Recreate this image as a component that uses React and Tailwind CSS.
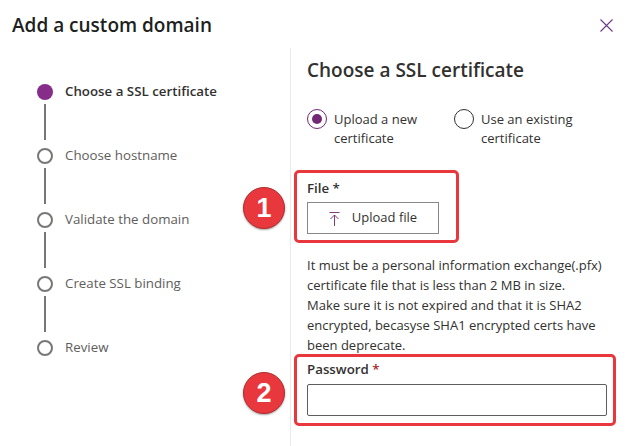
const steps = [
  { label: "Choose a SSL certificate", active: true },
  { label: "Choose hostname" },
  { label: "Validate the domain" },
  { label: "Create SSL binding" },
  { label: "Review" },
];

const Badge = ({ n, className }) => (
  <span
    className={`absolute flex items-center justify-center w-[42px] h-[42px] rounded-full bg-[#e8383d] border border-[#b32a2e] text-white text-[27px] font-bold leading-none shadow-[0_1px_2px_rgba(0,0,0,0.35)] ${className}`}
    style={{ fontFamily: '"Liberation Sans", Arial, sans-serif' }}
  >
    {n}
  </span>
);

const Radio = ({ checked, children, className }) => (
  <label className={`flex items-start gap-[7px] ${className}`}>
    <span
      className={`mt-[-1px] flex items-center justify-center w-5 h-5 shrink-0 rounded-full border ${
        checked ? "border-[#742774]" : "border-[#323130]"
      }`}
    >
      {checked && <span className="w-[10px] h-[10px] rounded-full bg-[#742774]" />}
    </span>
    <span className="text-[13px] leading-[19px] text-[#323130]">{children}</span>
  </label>
);

const UploadIcon = () => (
  <svg width="11" height="15" viewBox="0 0 11 15" fill="none" stroke="#742774" strokeWidth="0.9">
    <path d="M0.5 1.5h10" />
    <path d="M5.5 4v11" />
    <path d="M1.5 8l4-4 4 4" />
  </svg>
);

export default function App() {
  return (
    <div
      className="w-[627px] h-[446px] bg-white overflow-hidden flex flex-col"
      style={{ fontFamily: '"Segoe UI", "Open Sans", "Liberation Sans", sans-serif' }}
    >
      <div className="h-12 shrink-0 flex items-start justify-between pl-3 pr-[14px] pt-[11px]">
        <h1 className="text-[19px] leading-[28px] font-semibold text-[#201f1e]">Add a custom domain</h1>
        <button className="mt-[8px] text-[#6b3a8a]">
          <svg width="13" height="13" viewBox="0 0 13 13" stroke="currentColor" strokeWidth="1.1">
            <path d="M0.5 0.5l12 12M12.5 0.5l-12 12" />
          </svg>
        </button>
      </div>

      <div className="flex flex-1 min-h-0">
        <div className="w-[291px] shrink-0 border-r border-[#edebe9] pl-[37px] pt-9">
          {steps.map((s, i) => (
            <div key={s.label}>
              <div className="flex items-center gap-3 h-4">
                <span
                  className={`w-4 h-4 rounded-full shrink-0 ${
                    s.active ? "bg-[#862c89]" : "border-2 border-[#797775]"
                  }`}
                />
                <span
                  className={`text-[13.3px] ${
                    s.active ? "font-semibold text-[#323130]" : "text-[#605e5c]"
                  }`}
                >
                  {s.label}
                </span>
              </div>
              {i < steps.length - 1 && (
                <div className="ml-[7px] w-[2px] h-9 mt-1 mb-2 bg-[#797775]" />
              )}
            </div>
          ))}
        </div>

        <div className="flex-1 pl-4 pt-2">
          <h2 className="text-[19px] leading-[28px] font-semibold text-[#323130]">Choose a SSL certificate</h2>

          <div className="flex mt-[26px]">
            <Radio checked className="w-[147px]">
              Upload a new
              <br />
              certificate
            </Radio>
            <Radio>
              Use an existing
              <br />
              certificate
            </Radio>
          </div>

          <div className="relative w-fit mt-[30px]">
            <span className="absolute -left-[13px] -right-[20px] -top-2 -bottom-[9px] border-[3px] border-[#e8383d] rounded-[5px]" />
            <Badge n="1" className="-left-[64px] top-[9px]" />
            <div className="text-[13.3px] leading-5 font-semibold text-[#323130]">File *</div>
            <button className="mt-1 w-[132px] h-8 border border-[#8a8886] flex items-center justify-center gap-3 text-[13px] text-[#323130]">
              <UploadIcon />
              Upload file
            </button>
          </div>

          <p className="mt-[21px] text-[13px] leading-5 text-[#323130]">
            It must be a personal information exchange(.pfx)
            <br />
            certificate file that is less than 2 MB in size.
            <br />
            Make sure it is not expired and that it is SHA2
            <br />
            encrypted, becasyse SHA1 encrypted certs have
            <br />
            been deprecate.
          </p>

          <div className="relative w-[300px] mt-1">
            <span className="absolute -left-[13px] -right-[9px] -top-[5px] -bottom-[10px] border-[3px] border-[#e8383d] rounded-[5px]" />
            <Badge n="2" className="-left-[64px] top-[13px]" />
            <div className="text-[13.3px] leading-5 font-semibold text-[#323130]">
              Password <span className="text-[#a4262c]">*</span>
            </div>
            <input
              type="password"
              className="mt-[5px] block w-full h-8 border border-[#605e5c] rounded-[2px] outline-none"
            />
          </div>
        </div>
      </div>
    </div>
  );
}
